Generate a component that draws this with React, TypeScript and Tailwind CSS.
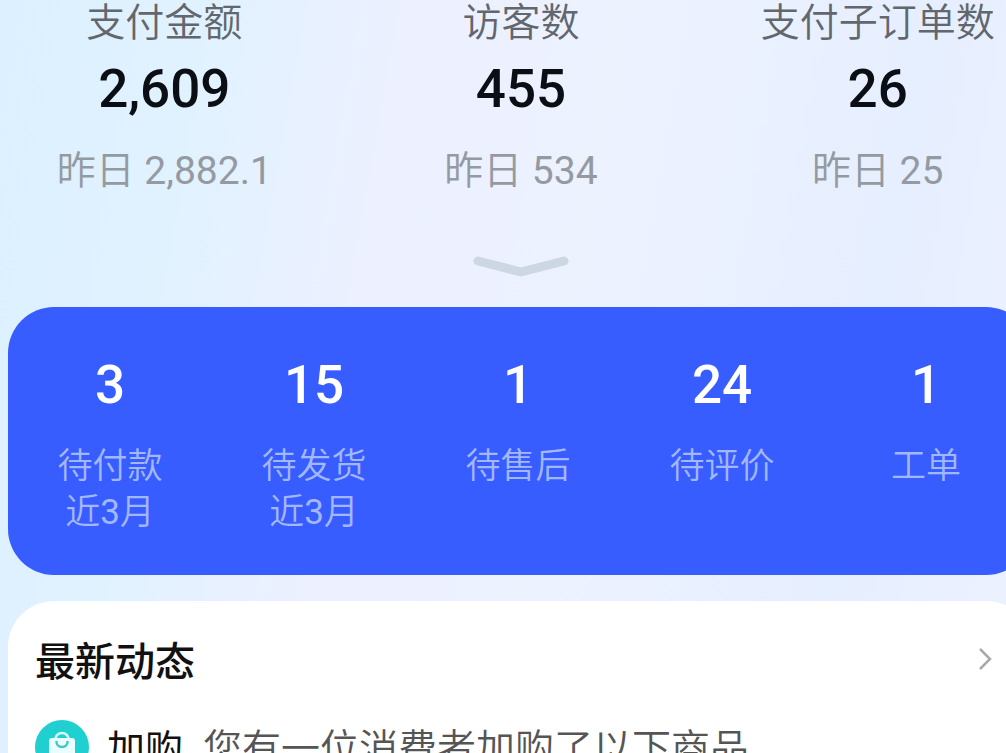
const stats = [
  { label: '支付金额', value: '2,609', previous: '2,882.1' },
  { label: '访客数', value: '455', previous: '534' },
  { label: '支付子订单数', value: '26', previous: '25' },
];

const todos = [
  { value: 3, label: '待付款', months: 3 },
  { value: 15, label: '待发货', months: 3 },
  { value: 1, label: '待售后' },
  { value: 24, label: '待评价' },
  { value: 1, label: '工单' },
];

function BagIcon() {
  return (
    <svg viewBox="0 0 54 54" className="size-[54px] shrink-0" aria-hidden="true">
      <circle cx="27" cy="27" r="27" fill="#20cfcf" />
      <path d="M20.5 20v-1a6.5 6 0 0 1 13 0v1" fill="none" stroke="#d5fafa" strokeWidth="2.5" />
      <path d="M17 18h20a3 3 0 0 1 3 3v17a3 3 0 0 1-3 3H17a3 3 0 0 1-3-3V21a3 3 0 0 1 3-3z" fill="#e9ffff" />
      <path d="M21.5 22a5.5 5 0 0 0 11 0" fill="none" stroke="#49c4c4" strokeWidth="2.5" strokeLinecap="round" />
    </svg>
  );
}

function Stats() {
  return (
    <section className="-mx-3.5 grid grid-cols-3 text-center">
      {stats.map((s) => (
        <div key={s.label} className="whitespace-nowrap">
          <h2 className="text-[39px] leading-[46px] font-[350] text-[#62666d]">{s.label}</h2>
          <p className="pt-2 text-[53px] leading-[70px] font-medium text-[#0b0e14]">{s.value}</p>
          <p className="pt-5 text-[39px] leading-[54px] font-[350] text-[#959aa2]">
            昨日 <span className="font-normal">{s.previous}</span>
          </p>
        </div>
      ))}
    </section>
  );
}

function Todos() {
  return (
    <section className="grid h-[268px] grid-cols-5 rounded-[46px] bg-[#375cff] pt-[45px] pr-1 text-center">
      {todos.map((t) => (
        <a key={t.label} href="#" className="block">
          <span className="block text-[53px] leading-[66px] font-medium text-white">{t.value}</span>
          <span className="block pt-[26px] text-[35px] leading-[46px] font-[350] text-[#a3b7ff]">
            {t.label}
            {t.months && (
              <span className="block">
                近<span className="font-normal">{t.months}</span>月
              </span>
            )}
          </span>
        </a>
      ))}
    </section>
  );
}

function News() {
  return (
    <section className="rounded-t-[46px] bg-white pr-10 pl-[27px] pt-[34px]">
      <a href="#" className="flex items-start justify-between">
        <h2 className="text-[40px] leading-[56px] font-[450] text-[#111111]">最新动态</h2>
        <svg viewBox="0 0 14 24" className="mt-3 h-6 w-3.5" fill="none" aria-hidden="true">
          <path d="M2 2l10 10L2 22" stroke="#a9a9a9" strokeWidth="2.5" />
        </svg>
      </a>
      <a href="#" className="flex items-start pt-[29px] whitespace-nowrap">
        <BagIcon />
        <span className="pt-0.5 pl-[18px] text-[38px] leading-[54px] text-[#111111]">加购</span>
        <span className="pt-0.5 pl-5 text-[39px] leading-[54px] font-[350] text-[#555555]">您有一位消费者加购了以下商品</span>
      </a>
    </section>
  );
}

export default function App() {
  return (
    <div className="h-screen overflow-hidden bg-[linear-gradient(100deg,#dcf0ff_0%,#e1f2ff_18%,#ecf0ff_36%,#edf2ff_55%,#e6efff_82%,#edf1ff_100%)] font-['Roboto','Noto_Sans_CJK_SC',sans-serif]">
      <main className="-mr-9">
        <Stats />
        <button type="button" aria-label="展开" className="mx-auto flex h-[109px] w-24 justify-center pt-[57px]">
          <svg viewBox="0 0 96 22" className="h-[22px] w-24" fill="none" aria-hidden="true">
            <path d="M5 6l43 11 43-11" stroke="#cdd6e3" strokeWidth="9" strokeLinecap="round" strokeLinejoin="round" />
          </svg>
        </button>
        <div className="flex flex-col gap-[26px] pr-2.5 pl-2">
          <Todos />
          <News />
        </div>
      </main>
    </div>
  );
}
